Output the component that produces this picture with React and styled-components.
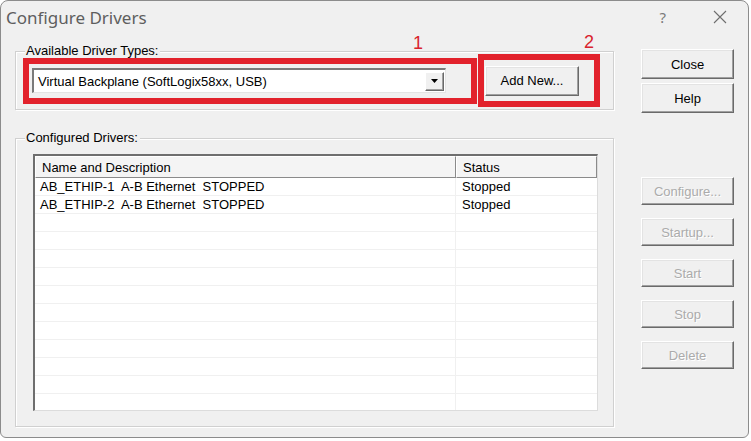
import React from "react";
import styled, { createGlobalStyle, css } from "styled-components";

const GlobalStyle = createGlobalStyle`
  html, body {
    margin: 0;
    padding: 0;
    background: #ffffff;
  }
  body {
    font-family: "Liberation Sans", Arial, sans-serif;
    font-size: 13px;
    color: #000;
  }
`;

const drivers = [
  { name: "AB_ETHIP-1  A-B Ethernet  STOPPED", status: "Stopped" },
  { name: "AB_ETHIP-2  A-B Ethernet  STOPPED", status: "Stopped" },
];

const EMPTY_ROWS = 11;

const App = () => {
  const rows = [
    ...drivers,
    ...Array.from({ length: EMPTY_ROWS }, () => ({ name: "", status: "" })),
  ];

  return (
    <>
      <GlobalStyle />
      <Window>
        <TitleBar>
          <Title>Configure Drivers</Title>
          <Controls>
            <HelpMark>?</HelpMark>
            <svg width="14" height="14" viewBox="0 0 14 14">
              <path d="M1 1 L13 13 M13 1 L1 13" stroke="#6e6e6e" strokeWidth="1.1" />
            </svg>
          </Controls>
        </TitleBar>

        <Body>
          <MainColumn>
            <Group $height={59}>
              <Legend>Available Driver Types:</Legend>
              <TypeRow>
                <Marker $width={454} $height={46} $padLeft={3}>
                  <MarkerNumber $right={48} $top={-30}>1</MarkerNumber>
                  <Combo>
                    <ComboText>Virtual Backplane (SoftLogix58xx, USB)</ComboText>
                    <ComboArrow>
                      <svg width="8" height="5" viewBox="0 0 8 5">
                        <path d="M0 0 H7 L3.5 4 Z" fill="#000" />
                      </svg>
                    </ComboArrow>
                  </Combo>
                </Marker>
                <Marker $width={122} $height={53} $padLeft={1}>
                  <MarkerNumber $right={0} $top={-27}>2</MarkerNumber>
                  <Button $width={94} $height={30}>Add New...</Button>
                </Marker>
              </TypeRow>
            </Group>

            <Group $height={289}>
              <Legend>Configured Drivers:</Legend>
              <ListView>
                <HeaderRow>
                  <HeaderCell>Name and Description</HeaderCell>
                  <HeaderCell>Status</HeaderCell>
                </HeaderRow>
                {rows.map((r, i) => (
                  <Row key={i}>
                    <Cell $first>{r.name}</Cell>
                    <Cell>{r.status}</Cell>
                  </Row>
                ))}
              </ListView>
            </Group>
          </MainColumn>

          <SideColumn>
            <ButtonStack $gap={4}>
              <Button $width={93} $height={30}>Close</Button>
              <Button $width={93} $height={30}>Help</Button>
            </ButtonStack>
            <ButtonStack $gap={13}>
              <Button $width={93} $height={28} disabled>Configure...</Button>
              <Button $width={93} $height={28} disabled>Startup...</Button>
              <Button $width={93} $height={28} disabled>Start</Button>
              <Button $width={93} $height={28} disabled>Stop</Button>
              <Button $width={93} $height={28} disabled>Delete</Button>
            </ButtonStack>
          </SideColumn>
        </Body>
      </Window>
    </>
  );
};

export default App;

const Window = styled.div`
  width: 749px;
  height: 438px;
  box-sizing: border-box;
  background: #f0f0f0;
  border: 1px solid #8c8c8c;
  border-radius: 8px 8px 6px 6px;
  display: flex;
  flex-direction: column;
  overflow: hidden;
`;

const TitleBar = styled.div`
  height: 34px;
  display: flex;
  align-items: center;
  justify-content: space-between;
  padding: 0 21px 0 5px;
  flex-shrink: 0;
`;

const Title = styled.div`
  font-family: "Noto Sans", "Open Sans", sans-serif;
  font-size: 17px;
  color: #5e5e5e;
  margin-top: -2px;
`;

const Controls = styled.div`
  display: flex;
  align-items: center;
  gap: 47px;
  margin-top: -2px;
`;

const HelpMark = styled.span`
  font-family: "Noto Sans", sans-serif;
  font-size: 15px;
  color: #7a7a7a;
`;

const Body = styled.div`
  display: flex;
  padding: 14px 0 0 14px;
  gap: 27px;
`;

const MainColumn = styled.div`
  display: flex;
  flex-direction: column;
  gap: 28px;
  width: 599px;
  padding-top: 2px;
`;

const Group = styled.div`
  position: relative;
  box-sizing: border-box;
  height: ${(p) => p.$height}px;
  border: 1px solid #d0d0d0;
  box-shadow: inset 1px 1px 0 #ffffff, 1px 1px 0 #ffffff;
  display: flex;
  flex-direction: column;
`;

const Legend = styled.span`
  position: absolute;
  left: 9px;
  top: -9px;
  padding: 0 2px 0 1px;
  background: #f0f0f0;
  font-size: 13px;
  line-height: 16px;
  color: #000;
`;

const TypeRow = styled.div`
  flex: 1;
  display: flex;
  align-items: center;
  padding-left: 7px;
  gap: 1px;
`;

const Marker = styled.div`
  position: relative;
  box-sizing: border-box;
  width: ${(p) => p.$width}px;
  height: ${(p) => p.$height}px;
  border: 6px solid #e2222c;
  display: flex;
  align-items: center;
  padding-left: ${(p) => p.$padLeft}px;
`;

const MarkerNumber = styled.span`
  position: absolute;
  right: ${(p) => p.$right}px;
  top: ${(p) => p.$top}px;
  font-size: 18px;
  line-height: 18px;
  color: #d9232d;
`;

const Combo = styled.div`
  box-sizing: border-box;
  width: 414px;
  height: 25px;
  background: #fff;
  border-style: solid;
  border-width: 2px 1px 1px 2px;
  border-color: #7a7a7a #e4e4e4 #e4e4e4 #7a7a7a;
  display: flex;
  align-items: center;
  padding: 0 1px 0 4px;
`;

const ComboText = styled.span`
  flex: 1;
  font-size: 13px;
  white-space: nowrap;
`;

const ComboArrow = styled.div`
  box-sizing: border-box;
  width: 19px;
  height: 19px;
  background: #f0f0f0;
  border: 1px solid;
  border-color: #fff #696969 #696969 #fff;
  box-shadow: inset -1px -1px 0 #a0a0a0;
  display: flex;
  align-items: center;
  justify-content: center;
`;

const SideColumn = styled.div`
  display: flex;
  flex-direction: column;
  gap: 64px;
`;

const ButtonStack = styled.div`
  display: flex;
  flex-direction: column;
  gap: ${(p) => p.$gap}px;
`;

const Button = styled.button`
  box-sizing: border-box;
  width: ${(p) => p.$width}px;
  height: ${(p) => p.$height}px;
  padding: 0;
  font-family: "Liberation Sans", Arial, sans-serif;
  font-size: 13px;
  color: #000;
  background: #f0f0f0;
  border: 1px solid;
  border-color: #ffffff #6a6a6a #6a6a6a #ffffff;
  box-shadow: inset -1px -1px 0 #a0a0a0, inset 1px 1px 0 #e3e3e3;
  border-radius: 0;
  ${(p) =>
    p.disabled &&
    css`
      color: #ababab;
      text-shadow: 1px 1px 0 #ffffff;
    `}
`;

const ListView = styled.div`
  margin: 15px 15px 15px 17px;
  flex: 1;
  box-sizing: border-box;
  background: #fff;
  border-style: solid;
  border-width: 2px 1px 1px 2px;
  border-color: #6e6e6e #dcdcdc #dcdcdc #6e6e6e;
  overflow: hidden;
`;

const columns = css`
  display: grid;
  grid-template-columns: 421px 1fr;
`;

const HeaderRow = styled.div`
  ${columns}
  height: 22px;
`;

const HeaderCell = styled.div`
  box-sizing: border-box;
  background: #f4f4f4;
  border: 1px solid;
  border-color: #ffffff #8a8a8a #8a8a8a #ffffff;
  padding-left: 6px;
  display: flex;
  align-items: center;
  font-size: 13px;
  white-space: nowrap;
`;

const Row = styled.div`
  ${columns}
  height: 18px;
  border-bottom: 1px solid #f0f0f0;
  box-sizing: border-box;
`;

const Cell = styled.div`
  padding-left: ${(p) => (p.$first ? 5 : 6)}px;
  border-right: ${(p) => (p.$first ? "1px solid #f0f0f0" : "none")};
  display: flex;
  align-items: center;
  font-size: 13px;
  white-space: pre;
`;
